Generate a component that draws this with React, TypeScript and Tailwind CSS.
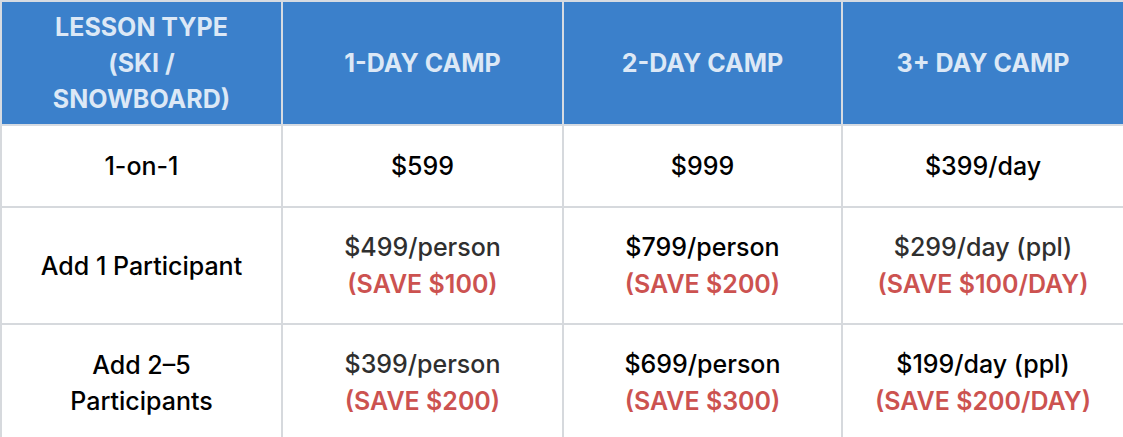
import React from 'react'

type Price = { main: string; save?: string; dark?: boolean }

const headers = ['LESSON TYPE (SKI / SNOWBOARD)', '1-DAY CAMP', '2-DAY CAMP', '3+ DAY CAMP']

const rows: { label: string; h: string; cells: Price[] }[] = [
  {
    label: '1-on-1',
    h: 'h-[82px]',
    cells: [{ main: '$599' }, { main: '$999' }, { main: '$399/day' }],
  },
  {
    label: 'Add 1 Participant',
    h: 'h-[117px]',
    cells: [
      { main: '$499/person', save: '(SAVE $100)', dark: true },
      { main: '$799/person', save: '(SAVE $200)' },
      { main: '$299/day (ppl)', save: '(SAVE $100/DAY)', dark: true },
    ],
  },
  {
    label: 'Add 2–5 Participants',
    h: 'h-[117px]',
    cells: [
      { main: '$399/person', save: '(SAVE $200)', dark: true },
      { main: '$699/person', save: '(SAVE $300)' },
      { main: '$199/day (ppl)', save: '(SAVE $200/DAY)' },
    ],
  },
]

export default function App() {
  return (
    <div className="w-[1123px] h-[437px] overflow-hidden bg-white font-['Inter',sans-serif]">
      <table className="w-[1123px] table-fixed border-collapse">
        <colgroup>
          <col className="w-[281px]" />
          <col className="w-[281px]" />
          <col className="w-[279px]" />
          <col className="w-[282px]" />
        </colgroup>
        <thead>
          <tr className="h-[124px] bg-[#3b80cb]">
            {headers.map((h, i) => (
              <th
                key={h}
                className={`border-2 border-[#d6dbe2] px-[40px] text-center align-middle text-[25px] font-bold leading-[36px] text-[#dce8f6] ${
                  i > 0 ? 'border-l-[#a8c6ea]' : ''
                }`}
              >
                {h}
              </th>
            ))}
          </tr>
        </thead>
        <tbody>
          {rows.map((r) => (
            <tr key={r.label} className={r.h}>
              <td className="border-2 border-[#d6d9dd] px-[34px] text-center align-middle text-[25px] font-medium leading-[36px] text-black">
                {r.label}
              </td>
              {r.cells.map((c) => (
                <td
                  key={c.main}
                  className="border-2 border-[#d6d9dd] text-center align-middle text-[25px] font-medium leading-[37px]"
                >
                  <div className={c.dark ? 'text-[#2f2f2f]' : 'text-black'}>{c.main}</div>
                  {c.save && <div className="font-semibold text-[#cc5250]">{c.save}</div>}
                </td>
              ))}
            </tr>
          ))}
        </tbody>
      </table>
    </div>
  )
}
